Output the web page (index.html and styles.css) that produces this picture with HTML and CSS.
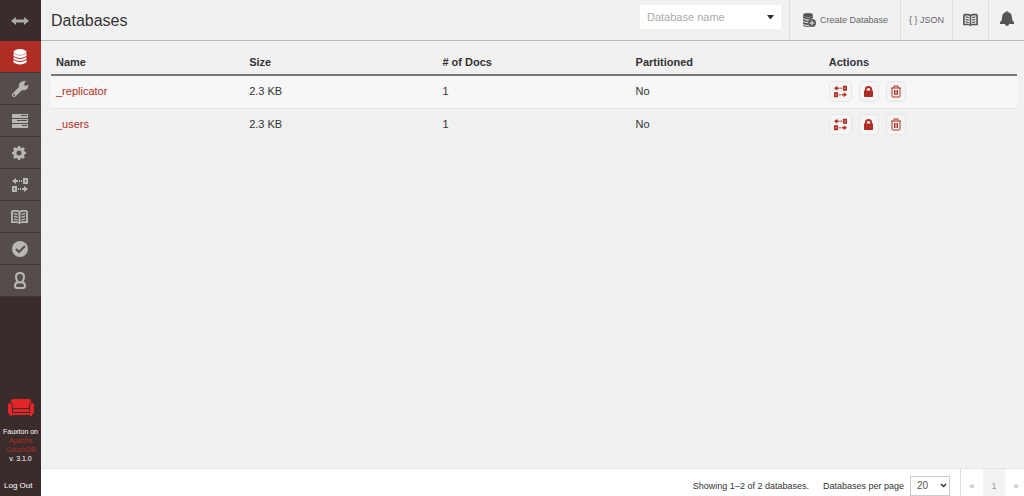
FILE: index.html
```html
<!DOCTYPE html>
<html lang="en">
<head>
  <meta charset="UTF-8">
  <meta name="viewport" content="width=device-width, initial-scale=1.0">
  <title>Project Fauxton</title>
  <link rel="stylesheet" href="styles.css">
</head>
<body>
  <!-- shared icons -->
  <svg class="sprite" aria-hidden="true">
    <symbol id="replicate" viewBox="0 0 18 16">
      <path d="M1 4l4-3v2h2v2H5v2zM8 3h1v2H8zM10 3h1v2h-1zM17 12l-4-3v2h-2v2h2v2zM7 11h1v2H7zM9 11h1v2H9z"/>
      <path fill-rule="evenodd" d="M12 1h5v6h-5zm2 2v2h1V3zM1 9h5v6H1zm2 2v2h1v-2z"/>
    </symbol>
    <symbol id="book" viewBox="0 0 18 17">
      <path fill-rule="evenodd" d="M1 1h5q2 0 3 1 1-1 3-1h5v1h1v13h-6q-2 0-3 1-1-1-3-1H0V2h1zm1 2v10h4q1 0 2 1V4Q7 3 6 3zm14 0h-4q-1 0-2 1v10q1-1 2-1h4z"/>
      <path d="M3 4l4 1v1.500L3 5.500zM3 7l4 1v1.500L3 8.500zM3 10l4 1v1.500l-4-1zM15 4l-4 1v1.500l4-1zM15 7l-4 1v1.500l4-1zM15 10l-4 1v1.500l4-1z"/>
    </symbol>
    <symbol id="lock" viewBox="0 0 10 12">
      <path fill-rule="evenodd" d="M1 5V4a4 4 0 0 1 8 0v1h1v6q0 1-1 1H1q-1 0-1-1V5zm2 0h4V4a2 2 0 0 0-4 0z"/>
    </symbol>
    <symbol id="trash" viewBox="0 0 12 13">
      <path fill="none" stroke="currentColor" d="M1 3h10M4 3V1h4v2M2 3v8q0 1 1 1h6q1 0 1-1V3M4.500 5v5M6 5v5M7.500 5v5"/>
    </symbol>
  </svg>

  <aside class="sidebar">
    <button class="burger" aria-label="Toggle menu">
      <svg width="20" height="10" viewBox="0 0 20 10"><path d="M1 5l5-4v2.500h8V1l5 4-5 4V6.500H6V9z"/></svg>
    </button>
    <nav class="nav">
      <a class="nav-item active" href="#databases" aria-label="Databases">
        <svg width="14" height="18" viewBox="0 0 14 18">
          <ellipse cx="7" cy="4" rx="6.500" ry="3"/>
          <path d="M.5 5.500q6.500 4 13 0v2.500q-6.500 4-13 0zM.5 9q6.500 4 13 0v2q-6.500 4-13 0zM.5 12q6.500 4 13 0v2.500q-6.500 4-13 0z"/>
        </svg>
      </a>
      <a class="nav-item" href="#setup" aria-label="Setup">
        <svg width="18" height="18" viewBox="0 0 18 18"><path fill-rule="evenodd" d="M13 1l2 0-2 3 1 2 3-1q1-1 0 2-1 4-6 3l-6 6q-2 2-4 0-1-2 1-3l6-6q-1-5 5-6zM3 14a1 1 0 1 0 0 2 1 1 0 0 0 0-2z"/></svg>
      </a>
      <a class="nav-item" href="#activetasks" aria-label="Active Tasks">
        <svg width="18" height="14" viewBox="0 0 18 14"><path fill-rule="evenodd" d="M1 0h16v4H1zm9 1v1h6V1zM1 5h16v4H1zm5 1v1h10V6zM1 10h16v4H1zm10 1v1h5v-1z"/></svg>
      </a>
      <a class="nav-item gear" href="#config" aria-label="Configuration">
        <svg width="16" height="16" viewBox="0 0 16 16">
          <circle cx="8" cy="8" r="4" fill="none" stroke="currentColor" stroke-width="3"/>
          <path d="M7 1h2l1 3H6zM7 15h2l1-3H6zM1 7v2l3 1V6zM15 7v2l-3 1V6zM2 4l2-2 2 2-2 2zM14 4l-2-2-2 2 2 2zM2 12l2 2 2-2-2-2zM14 12l-2 2-2-2 2-2z"/>
        </svg>
      </a>
      <a class="nav-item" href="#replication" aria-label="Replication"><svg width="18" height="16"><use href="#replicate"/></svg></a>
      <a class="nav-item" href="#documentation" aria-label="Documentation"><svg width="17" height="16"><use href="#book"/></svg></a>
      <a class="nav-item" href="#verify" aria-label="Verify">
        <svg width="18" height="18" viewBox="0 0 18 18"><circle cx="9" cy="9" r="8"/><path class="tick" d="M5 9l3 3 6-6"/></svg>
      </a>
      <a class="nav-item" href="#account" aria-label="Account">
        <svg width="14" height="18" viewBox="0 0 14 18"><path class="outline" d="M5 10q-2-2-2-5 0-4 4-4t4 4q0 3-2 5 3 1 3 4 0 2-2 2H4q-2 0-2-2 0-3 3-4 2 1 4 0"/></svg>
      </a>
    </nav>
    <footer class="brand">
      <svg width="26" height="18" viewBox="0 0 26 18">
        <path d="M5 0h16q2 0 2 3-2 1-2 4v2H5V7q0-3-2-4 0-3 2-3z"/>
        <path d="M0 6q0-2 2-2t2 2v8h18V6q0-2 2-2t2 2v7q0 2-2 3v1h-2v-1H4v1H2v-1q-2-1-2-3zM5 10h16v3H5z"/>
      </svg>
      <div class="version">
        <div>Fauxton on</div>
        <a href="#couchdb">Apache<br>CouchDB</a>
        <div>v. 3.1.0</div>
      </div>
      <a class="logout" href="#logout">Log Out</a>
    </footer>
  </aside>

  <div class="page">
    <header class="topbar">
      <h1>Databases</h1>
      <label class="search">
        <input type="text" placeholder="Database name" aria-label="Database name">
        <svg width="7" height="4" viewBox="0 0 7 4"><path d="M0 0h7L4 4H3z"/></svg>
      </label>
      <button class="bar-btn create">
        <svg width="14" height="14" viewBox="0 0 14 14">
          <ellipse cx="6" cy="2" rx="5" ry="2"/>
          <path d="M1 3q5 3 10 0v2q-5 3-10 0zM1 6q5 3 7 1l-2 2q-3 0-5-1zM1 9q2 1 5 1v2q-3 0-5-1zM1 12q2 1 6 1v1q-4 0-6-1z"/>
          <path fill-rule="evenodd" d="M10 6a4 4 0 1 0 0 8 4 4 0 0 0 0-8zM9.500 7.500h1v2h2v1h-2v2h-1v-2h-2v-1h2z"/>
        </svg>
        Create Database
      </button>
      <a class="bar-btn json" href="#json">{ } JSON</a>
      <a class="bar-btn docs" href="#docs" aria-label="Documentation"><svg width="15" height="14"><use href="#book"/></svg></a>
      <button class="bar-btn bell" aria-label="Notifications">
        <svg width="14" height="16" viewBox="0 0 14 16"><path d="M6 1q1-2 2 0 4 1 4 6 0 3 2 4v2H0v-2q2-1 2-4 0-5 4-6zM5 13h4q0 2-2 2t-2-2z"/></svg>
      </button>
    </header>

    <main class="content">
      <table class="databases">
        <thead>
          <tr><th>Name</th><th>Size</th><th># of Docs</th><th>Partitioned</th><th>Actions</th></tr>
        </thead>
        <tbody>
          <tr>
            <td><a href="#_replicator">_replicator</a></td><td>2.3 KB</td><td>1</td><td>No</td>
            <td>
              <div class="actions">
                <a class="wide" href="#replicate-replicator" aria-label="Replicate _replicator"><svg width="15" height="13"><use href="#replicate"/></svg></a>
                <a href="#lock-replicator" aria-label="Permissions for _replicator"><svg width="9" height="11"><use href="#lock"/></svg></a>
                <button aria-label="Delete _replicator"><svg width="12" height="13"><use href="#trash"/></svg></button>
              </div>
            </td>
          </tr>
          <tr>
            <td><a href="#_users">_users</a></td><td>2.3 KB</td><td>1</td><td>No</td>
            <td>
              <div class="actions">
                <a class="wide" href="#replicate-users" aria-label="Replicate _users"><svg width="15" height="13"><use href="#replicate"/></svg></a>
                <a href="#lock-users" aria-label="Permissions for _users"><svg width="9" height="11"><use href="#lock"/></svg></a>
                <button aria-label="Delete _users"><svg width="12" height="13"><use href="#trash"/></svg></button>
              </div>
            </td>
          </tr>
        </tbody>
      </table>
    </main>

    <footer class="pager">
      <span>Showing 1–2 of 2 databases.</span>
      <label for="per-page">Databases per page</label>
      <span class="select">
        <select id="per-page"><option>20</option><option>30</option><option>50</option><option>100</option></select>
        <svg width="7" height="5" viewBox="0 0 7 5"><path d="M1 1l2.500 2.500L6 1"/></svg>
      </span>
      <nav class="pages">
        <a href="#prev">«</a>
        <a class="current" href="#1">1</a>
        <a href="#next">»</a>
      </nav>
    </footer>
  </div>
</body>
</html>
```
FILE: styles.css
```css
* {
  box-sizing: border-box;
}

body {
  margin: 0;
  display: flex;
  height: 100vh;
  overflow: hidden;
  font-family: "Liberation Sans", Arial, sans-serif;
  font-size: 11px;
  color: #333;
  background: #f1f1f1;
}

.sprite {
  position: absolute;
  width: 0;
  height: 0;
}

svg {
  display: block;
  flex: none;
  fill: currentColor;
}

a {
  color: #af2d24;
  text-decoration: none;
}

button {
  padding: 0;
  border: none;
  background: none;
  font-family: inherit;
  color: inherit;
  cursor: pointer;
}

/* sidebar */
.sidebar {
  flex: none;
  display: flex;
  flex-direction: column;
  width: 41px;
  background: #3a2c2b;
}

.burger {
  display: grid;
  place-items: center;
  height: 41px;
  padding-right: 2px;
  color: #aaa;
}

.nav-item {
  display: grid;
  place-items: center;
  height: 32px;
  padding-right: 2px;
  border-bottom: 1px solid #443432;
  background: #554d4b;
  color: #b9b7b6;
}

.nav-item.active {
  background: #af2d24;
  color: #fff;
}

.gear {
  padding-right: 4px;
}

.tick,
.outline {
  fill: none;
  stroke: currentColor;
  stroke-width: 2;
}

.tick {
  stroke: #554d4b;
}

.brand {
  margin-top: auto;
  display: flex;
  flex-direction: column;
  align-items: center;
  color: #fff;
}

.brand svg {
  color: #e42528;
}

.version {
  padding: 10px 0 17px;
  font-size: 7px;
  line-height: 9px;
  text-align: center;
}

.logout {
  align-self: flex-start;
  padding: 0 4px 4px;
  font-size: 8px;
  line-height: 12px;
  color: #fff;
}

/* main column */
.page {
  flex: 1;
  display: flex;
  flex-direction: column;
  min-width: 0;
}

.topbar {
  display: flex;
  height: 41px;
  border-bottom: 1px solid #bbb;
}

.topbar h1 {
  flex: 1;
  margin: 0;
  padding-left: 10px;
  font-size: 16px;
  font-weight: normal;
  line-height: 42px;
}

.search {
  display: flex;
  align-items: center;
  width: 141px;
  height: 24px;
  margin: 5px 8px 0 0;
  padding: 0 7px;
  background: #fff;
}

.search input {
  flex: 1;
  min-width: 0;
  padding: 0;
  border: none;
  outline: none;
  font: inherit;
}

.search input::placeholder {
  color: #aaa;
}

.bar-btn {
  display: flex;
  align-items: center;
  justify-content: center;
  border-left: 1px solid #ddd;
  font-size: 9px;
  color: #666;
}

.create {
  gap: 4px;
  width: 111px;
}

.create svg,
.docs svg,
.bell svg {
  color: #555;
}

.json {
  width: 52px;
}

.docs,
.bell {
  width: 36px;
}

.bell {
  padding-bottom: 2px;
}

.content {
  flex: 1;
  padding: 9px 7px 0 10px;
}

.databases {
  width: 100%;
  table-layout: fixed;
  border-collapse: separate;
  border-spacing: 0;
}

th,
td {
  padding: 0 5px;
  text-align: left;
}

th {
  height: 26px;
  border-bottom: 2px solid #737972;
}

td {
  height: 33px;
  padding-bottom: 2px;
  border-bottom: 1px solid #e7e7e7;
}

tbody tr:nth-child(odd) {
  background: #f7f7f7;
}

tbody tr:last-child td {
  border-bottom-color: transparent;
}

.actions {
  display: flex;
  gap: 7px;
  color: #af2d24;
}

.actions a,
.actions button {
  display: grid;
  place-items: center;
  width: 20px;
  height: 21px;
  border: 1px solid #e7e7e7;
  border-radius: 4px;
  background: #f5f5f5;
}

.actions .wide {
  width: 23px;
}

/* footer */
.pager {
  display: flex;
  align-items: center;
  justify-content: flex-end;
  height: 28px;
  padding-top: 6px;
  border-top: 1px solid #e3e3e3;
  background: #fff;
  font-size: 9px;
}

.pager label {
  margin: 0 6px 0 14px;
}

.select {
  display: grid;
  align-items: center;
  width: 40px;
}

.select select,
.select svg {
  grid-area: 1 / 1;
}

.select select {
  appearance: none;
  height: 20px;
  padding: 0 6px;
  border: 1px solid #ccc;
  border-radius: 0;
  background: #fff;
  font-family: inherit;
  font-size: 10px;
  color: #555;
}

.select svg {
  justify-self: end;
  margin-right: 3px;
  fill: none;
  stroke: #333;
  stroke-width: 1.5;
  pointer-events: none;
}

.pages {
  display: flex;
  align-self: stretch;
  margin: -6px -3px 0 10px;
  border-left: 1px solid #ddd;
}

.pages a {
  width: 22px;
  padding-top: 6px;
  line-height: 22px;
  text-align: center;
  color: #999;
}

.pages .current {
  background: #f3f3f3;
}
```
